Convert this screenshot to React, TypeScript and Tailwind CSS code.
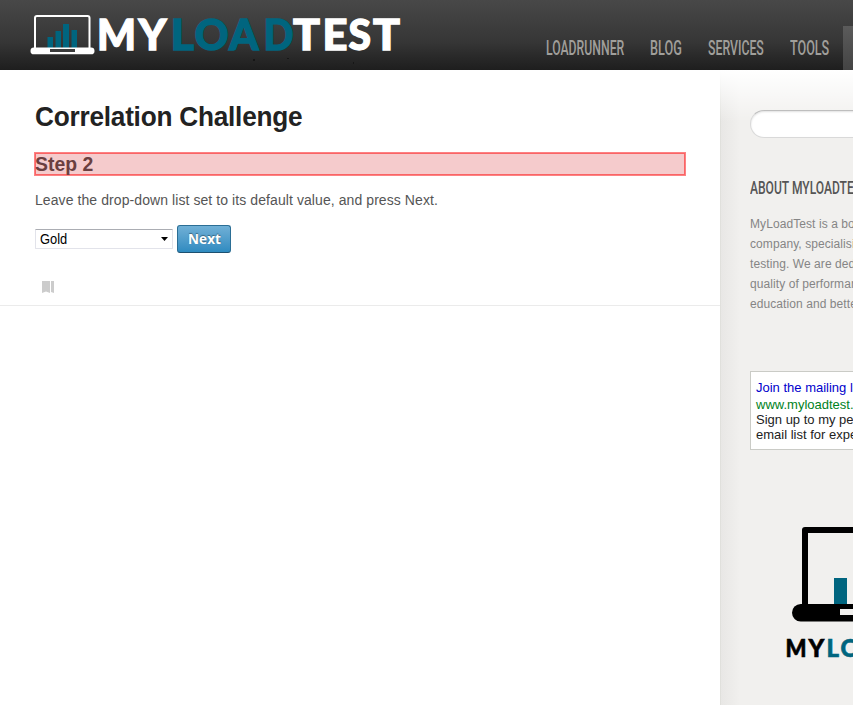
const nav = [
  { label: 'LOADRUNNER', box: 'w-[78px]', scale: 'scale-x-[0.627]' },
  { label: 'BLOG', box: 'w-[32px]', scale: 'scale-x-[0.65]' },
  { label: 'SERVICES', box: 'w-[56px]', scale: 'scale-x-[0.63]' },
  { label: 'TOOLS', box: 'w-[40px]', scale: 'scale-x-[0.645]' },
];

const letters = [
  { ch: 'M', x: 97, w: 39, fill: '#fff' },
  { ch: 'Y', x: 138.5, w: 28, fill: '#fff' },
  { ch: 'L', x: 170.5, w: 23.5, fill: '#00657f' },
  { ch: 'O', x: 194.5, w: 34, fill: '#00657f' },
  { ch: 'A', x: 229, w: 29.5, fill: '#00657f' },
  { ch: 'D', x: 263.5, w: 30, fill: '#00657f' },
  { ch: 'T', x: 293, w: 27, fill: '#fff' },
  { ch: 'E', x: 322.5, w: 25, fill: '#fff' },
  { ch: 'S', x: 348.5, w: 22.5, fill: '#fff' },
  { ch: 'T', x: 373, w: 27, fill: '#fff' },
];

function Logo() {
  return (
    <svg width="376" height="70" viewBox="28 0 376 70" className="block shrink-0" aria-label="MyLoadTest">
      <rect x="35" y="16" width="54.5" height="34" rx="2" fill="none" stroke="#fff" strokeWidth="2" />
      <path d="M47.5 37h5.5v11h-5.5zM55.5 31h5.5v17h-5.5zM63 24h6v24h-6zM71.5 30h5.5v18h-5.5z" fill="#00657f" />
      <rect x="30.5" y="47.5" width="64" height="6.8" rx="3.4" fill="#fff" />
      <rect x="50" y="49" width="25" height="3" fill="#3c3c3c" />
      <path d="M253 59h2v2h-2zM287 58h2v1h-2zM353 62h1v2h-1z" fill="#161616" />
      <g fontFamily="Lato, sans-serif" fontWeight="900" fontSize="41.5" strokeWidth="1.3">
        {letters.map((l) => (
          <text key={l.x} x={l.x} y="50" textLength={l.w} lengthAdjust="spacingAndGlyphs" fill={l.fill} stroke={l.fill}>
            {l.ch}
          </text>
        ))}
      </g>
    </svg>
  );
}

function SidebarLogo() {
  return (
    <svg width="100" height="140" viewBox="784 525 100 140" className="ml-[34px] mt-[75px] block">
      <path d="M805 612V530h60" fill="none" stroke="#000" strokeWidth="6" strokeLinejoin="round" />
      <rect x="834" y="578" width="13" height="27" fill="#00657f" />
      <rect x="792" y="604" width="90" height="17.5" rx="8.7" fill="#000" />
      <rect x="840" y="609" width="20" height="6" fill="#f1f0ee" />
      <g fontFamily="Lato, sans-serif" fontWeight="900" fontSize="24" strokeWidth="0.6">
        <text x="785.5" y="657" textLength="21" lengthAdjust="spacingAndGlyphs" stroke="#000">M</text>
        <text x="808.5" y="657" stroke="#000">Y</text>
        <text x="826.5 840.5" y="657" fill="#00657f" stroke="#00657f">LO</text>
      </g>
    </svg>
  );
}

export default function App() {
  return (
    <div className="flex h-[705px] w-[853px] flex-col overflow-hidden bg-white font-['Liberation_Sans',Arial,sans-serif]">
      <header className="flex h-[70px] shrink-0 bg-linear-to-b from-[#484848] via-[#363636] via-60% to-[#1e1e1e] pl-[28px]">
        <Logo />
        <nav className="ml-[142px] mt-[37px] flex gap-[26px] font-[Roboto,sans-serif] text-[19.5px] font-medium leading-6 text-[#a09f9b]">
          {nav.map((item) => (
            <a key={item.label} className={item.box}>
              <span className={`inline-block origin-left ${item.scale}`}>{item.label}</span>
            </a>
          ))}
        </nav>
        <div className="ml-[13px] mt-[26px] h-[44px] w-[10px] shrink-0 bg-linear-to-b from-[#5b5b5b] to-[#444]" />
      </header>
      <div className="flex min-h-0 flex-1">
        <main className="w-[720px] shrink-0">
          <div className="h-[236px] border-b border-[#ebebeb] pl-[35px] pt-[31px]">
            <h1 className="h-[31px] origin-left scale-x-[0.936] whitespace-nowrap text-[28px] font-bold leading-8 tracking-[-0.25px] text-[#222]">Correlation Challenge</h1>
            <h2 className="-ml-px mt-[20px] h-[24px] w-[652px] border border-[#fc8283] bg-[#f5cbcc] text-[20px] font-bold leading-[22px] text-[#6b3f40] shadow-[inset_0_0_0_1px_#fa6465]">
              <span className="inline-block origin-left scale-x-[0.97]">Step 2</span>
            </h2>
            <p className="mt-[14px] whitespace-nowrap text-[14px] leading-5 tracking-[0.08px] text-[#555]">
              Leave the drop-down list set to its default value, and press Next.
            </p>
            <div className="mt-[15px] flex items-center gap-1">
              <button className="flex h-5 w-[138px] items-center justify-between rounded-[1px] border border-[#e2e3ea] border-t-[#abadb3] pl-1 pr-1 text-[14px] text-black">
                <span className="origin-left scale-x-[0.92]">Gold</span>
                <svg width="7" height="4" viewBox="0 0 7 4"><path d="M0 0h7L3.5 4z" /></svg>
              </button>
              <button className="h-7 w-[54px] rounded-[3px] border border-[#2b6e95] border-b-[#1c5070] bg-linear-to-b from-[#70b0d6] to-[#2e8bc0] pl-px font-['Open_Sans',sans-serif] text-[13.5px] font-bold leading-[26px] tracking-[0.1px] text-white [text-shadow:0_-1px_1px_rgba(0,0,0,.4)]">
                Next
              </button>
            </div>
            <svg className="ml-[7px] mt-[28px] block" width="12" height="12" viewBox="0 0 12 12" fill="#ccc">
              <path d="M0 0h8v12L4 10.5 0 12zM9 0h3v12L9 11z" />
            </svg>
          </div>
        </main>
        <aside className="w-[133px] shrink-0 overflow-hidden bg-[linear-gradient(to_bottom,#fff_0,rgba(255,255,255,0)_52px),linear-gradient(to_right,#e0e0dc_1px,#e8e7e5_1px,#f1f0ee_20px)] pl-[30px] pt-[40px]">
          <div className="h-[28px] w-[200px] rounded-full border border-[#d9d9d9] border-t-[#bebebe] bg-white shadow-[inset_0_1px_2px_rgba(0,0,0,.12)]" />
          <h3 className="mt-[38px] h-6 w-[200px] origin-left scale-x-[0.635] whitespace-nowrap font-[Roboto,sans-serif] text-[19px] font-medium leading-6 text-[#555]">ABOUT MYLOADTEST</h3>
          <p className="mt-[14px] whitespace-nowrap text-[12px] leading-5 tracking-[0.08px] text-[#858585]">
            MyLoadTest is a boutique<br />company, specialising in<br />testing. We are dedicated<br />quality of performance<br />education and better
          </p>
          <div className="mt-[57px] h-[79px] w-[200px] whitespace-nowrap border border-[#cacbc6] bg-white pl-[5px] pt-[8px] text-[13px] leading-[15px] text-[#222]">
            <div className="text-[#0000cc]">Join the mailing list</div>
            <div className="mt-[2px] text-[#008222]">www.myloadtest.com</div>
            <div>Sign up to my performance</div>
            <div>email list for expert</div>
          </div>
          <SidebarLogo />
        </aside>
      </div>
    </div>
  );
}
